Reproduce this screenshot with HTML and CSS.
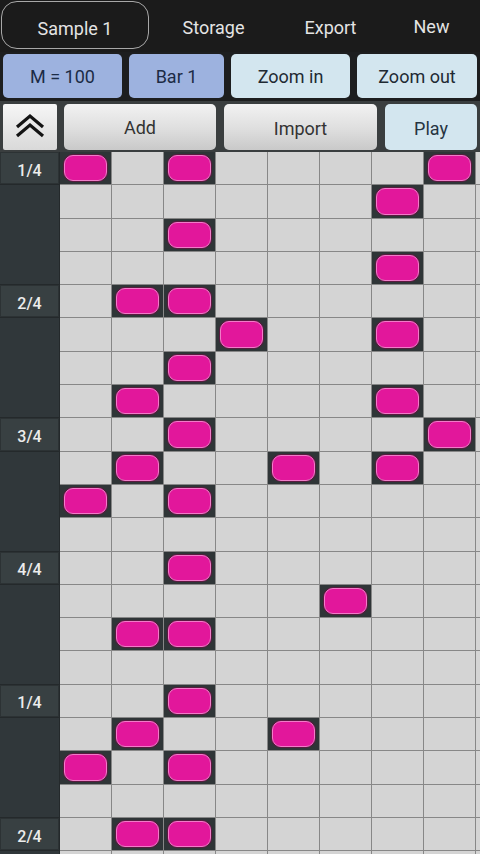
FILE: index.html
```html
<!DOCTYPE html>
<html>
<head>
<meta charset="utf-8">
<link rel="stylesheet" href="styles.css">
</head>
<body>
<div class="app">
  <div class="tabs">
    <div class="tab tab-active">Sample 1</div>
    <div class="tab tab-storage">Storage</div>
    <div class="tab tab-export">Export</div>
    <div class="tab tab-new">New</div>
  </div>
  <div class="toolbar">
    <div class="btn btn-blue w-m">M = 100</div>
    <div class="btn btn-blue w-bar">Bar 1</div>
    <div class="btn btn-light w-zin">Zoom in</div>
    <div class="btn btn-light w-zout">Zoom out</div>
  </div>
  <div class="actions">
    <div class="btn-collapse">
      <svg width="54" height="44" viewBox="0 0 54 44">
        <path d="M14 22 L27 11 L40 22" fill="none" stroke="#141414" stroke-width="3.2"/>
        <path d="M14 31 L27 20 L40 31" fill="none" stroke="#141414" stroke-width="3.2"/>
      </svg>
    </div>
    <div class="btn btn-gray w-add">Add</div>
    <div class="btn btn-gray w-import">Import</div>
    <div class="btn btn-light w-play">Play</div>
  </div>
  <div class="board">
    <div class="labels">
      <div class="lab">1/4</div><div class="fill"></div>
      <div class="lab">2/4</div><div class="fill"></div>
      <div class="lab">3/4</div><div class="fill"></div>
      <div class="lab">4/4</div><div class="fill"></div>
      <div class="lab">1/4</div><div class="fill"></div>
      <div class="lab">2/4</div><div class="fill"></div>
    </div>
    <div class="cells">
      <!-- row 0 -->
      <div class="cell note"><span class="pill"></span></div><div class="cell"></div><div class="cell note"><span class="pill"></span></div><div class="cell"></div><div class="cell"></div><div class="cell"></div><div class="cell"></div><div class="cell note"><span class="pill"></span></div><div class="cell"></div>
      <!-- row 1 -->
      <div class="cell"></div><div class="cell"></div><div class="cell"></div><div class="cell"></div><div class="cell"></div><div class="cell"></div><div class="cell note"><span class="pill"></span></div><div class="cell"></div><div class="cell"></div>
      <!-- row 2 -->
      <div class="cell"></div><div class="cell"></div><div class="cell note"><span class="pill"></span></div><div class="cell"></div><div class="cell"></div><div class="cell"></div><div class="cell"></div><div class="cell"></div><div class="cell"></div>
      <!-- row 3 -->
      <div class="cell"></div><div class="cell"></div><div class="cell"></div><div class="cell"></div><div class="cell"></div><div class="cell"></div><div class="cell note"><span class="pill"></span></div><div class="cell"></div><div class="cell"></div>
      <!-- row 4 -->
      <div class="cell"></div><div class="cell note"><span class="pill"></span></div><div class="cell note"><span class="pill"></span></div><div class="cell"></div><div class="cell"></div><div class="cell"></div><div class="cell"></div><div class="cell"></div><div class="cell"></div>
      <!-- row 5 -->
      <div class="cell"></div><div class="cell"></div><div class="cell"></div><div class="cell note"><span class="pill"></span></div><div class="cell"></div><div class="cell"></div><div class="cell note"><span class="pill"></span></div><div class="cell"></div><div class="cell"></div>
      <!-- row 6 -->
      <div class="cell"></div><div class="cell"></div><div class="cell note"><span class="pill"></span></div><div class="cell"></div><div class="cell"></div><div class="cell"></div><div class="cell"></div><div class="cell"></div><div class="cell"></div>
      <!-- row 7 -->
      <div class="cell"></div><div class="cell note"><span class="pill"></span></div><div class="cell"></div><div class="cell"></div><div class="cell"></div><div class="cell"></div><div class="cell note"><span class="pill"></span></div><div class="cell"></div><div class="cell"></div>
      <!-- row 8 -->
      <div class="cell"></div><div class="cell"></div><div class="cell note"><span class="pill"></span></div><div class="cell"></div><div class="cell"></div><div class="cell"></div><div class="cell"></div><div class="cell note"><span class="pill"></span></div><div class="cell"></div>
      <!-- row 9 -->
      <div class="cell"></div><div class="cell note"><span class="pill"></span></div><div class="cell"></div><div class="cell"></div><div class="cell note"><span class="pill"></span></div><div class="cell"></div><div class="cell note"><span class="pill"></span></div><div class="cell"></div><div class="cell"></div>
      <!-- row 10 -->
      <div class="cell note"><span class="pill"></span></div><div class="cell"></div><div class="cell note"><span class="pill"></span></div><div class="cell"></div><div class="cell"></div><div class="cell"></div><div class="cell"></div><div class="cell"></div><div class="cell"></div>
      <!-- row 11 -->
      <div class="cell"></div><div class="cell"></div><div class="cell"></div><div class="cell"></div><div class="cell"></div><div class="cell"></div><div class="cell"></div><div class="cell"></div><div class="cell"></div>
      <!-- row 12 -->
      <div class="cell"></div><div class="cell"></div><div class="cell note"><span class="pill"></span></div><div class="cell"></div><div class="cell"></div><div class="cell"></div><div class="cell"></div><div class="cell"></div><div class="cell"></div>
      <!-- row 13 -->
      <div class="cell"></div><div class="cell"></div><div class="cell"></div><div class="cell"></div><div class="cell"></div><div class="cell note"><span class="pill"></span></div><div class="cell"></div><div class="cell"></div><div class="cell"></div>
      <!-- row 14 -->
      <div class="cell"></div><div class="cell note"><span class="pill"></span></div><div class="cell note"><span class="pill"></span></div><div class="cell"></div><div class="cell"></div><div class="cell"></div><div class="cell"></div><div class="cell"></div><div class="cell"></div>
      <!-- row 15 -->
      <div class="cell"></div><div class="cell"></div><div class="cell"></div><div class="cell"></div><div class="cell"></div><div class="cell"></div><div class="cell"></div><div class="cell"></div><div class="cell"></div>
      <!-- row 16 -->
      <div class="cell"></div><div class="cell"></div><div class="cell note"><span class="pill"></span></div><div class="cell"></div><div class="cell"></div><div class="cell"></div><div class="cell"></div><div class="cell"></div><div class="cell"></div>
      <!-- row 17 -->
      <div class="cell"></div><div class="cell note"><span class="pill"></span></div><div class="cell"></div><div class="cell"></div><div class="cell note"><span class="pill"></span></div><div class="cell"></div><div class="cell"></div><div class="cell"></div><div class="cell"></div>
      <!-- row 18 -->
      <div class="cell note"><span class="pill"></span></div><div class="cell"></div><div class="cell note"><span class="pill"></span></div><div class="cell"></div><div class="cell"></div><div class="cell"></div><div class="cell"></div><div class="cell"></div><div class="cell"></div>
      <!-- row 19 -->
      <div class="cell"></div><div class="cell"></div><div class="cell"></div><div class="cell"></div><div class="cell"></div><div class="cell"></div><div class="cell"></div><div class="cell"></div><div class="cell"></div>
      <!-- row 20 -->
      <div class="cell"></div><div class="cell note"><span class="pill"></span></div><div class="cell note"><span class="pill"></span></div><div class="cell"></div><div class="cell"></div><div class="cell"></div><div class="cell"></div><div class="cell"></div><div class="cell"></div>
      <!-- row 21 -->
      <div class="cell"></div><div class="cell"></div><div class="cell"></div><div class="cell"></div><div class="cell"></div><div class="cell"></div><div class="cell"></div><div class="cell"></div><div class="cell"></div>
    </div>
  </div>
</div>
</body>
</html>
```

FILE: styles.css
```css
* { box-sizing: border-box; }
html, body {
  margin: 0;
  padding: 0;
  width: 480px;
  height: 854px;
  overflow: hidden;
  background: #1c1c1c;
  font-family: Roboto, "Noto Sans", "Liberation Sans", sans-serif;
}
.app {
  width: 480px;
  height: 854px;
  display: flex;
  flex-direction: column;
  overflow: hidden;
}

/* top tabs */
.tabs {
  height: 52px;
  flex: none;
  display: flex;
  align-items: stretch;
  padding: 1px 0 3px 1px;
  background: #1b1b1b;
}
.tab {
  display: flex;
  align-items: center;
  justify-content: center;
  color: #e4e4e4;
  font-size: 18px;
  padding-top: 5px;
}
.tab-active {
  width: 148px;
  padding-top: 6px;
  border: 1.5px solid #a8a8a8;
  border-radius: 16px;
}
.tab-storage { width: 129px; }
.tab-export { width: 105px; }
.tab-new { width: 97px; padding-top: 2px; }

/* buttons */
.btn {
  display: flex;
  align-items: center;
  justify-content: center;
  font-size: 18px;
  border-radius: 5px;
}
.toolbar {
  height: 49px;
  flex: none;
  display: flex;
  padding: 2px 0 3px 3px;
  background: #1d1e1f;
}
.btn-blue {
  background: #9db2df;
  color: #1c2b45;
}
.btn-light {
  background: #d3e6ef;
  color: #1f2a33;
}
.w-m { width: 119px; margin-right: 7px; }
.w-bar { width: 95px; margin-right: 7px; }
.w-zin { width: 119px; margin-right: 7px; }
.w-zout { width: 120px; }

.actions {
  height: 51px;
  flex: none;
  display: flex;
  padding: 3px 0 2px 3px;
  background: #3a3e3f;
}
.btn-collapse {
  width: 54px;
  margin-right: 7px;
  border-radius: 2px;
  background: linear-gradient(#f6f6f6, #d9d9d9);
  display: flex;
  align-items: center;
  justify-content: center;
}
.btn-gray {
  background: linear-gradient(#f2f2f2 0%, #dedede 55%, #c9c9c9 100%);
  color: #333;
  padding-top: 1px;
}
.w-add { width: 152px; margin-right: 8px; }
.w-import { width: 153px; margin-right: 8px; padding-top: 3px; }
.w-play { width: 92px; color: #263441; padding-top: 3px; }

/* board */
.board {
  flex: 1;
  display: flex;
  overflow: hidden;
  background: #878787;
}
.labels {
  width: 60px;
  flex: none;
  display: flex;
  flex-direction: column;
  gap: 1px;
  background: #24292b;
  border-right: 1px solid #24292b;
}
.lab {
  height: 32.3px;
  flex: none;
  display: flex;
  align-items: center;
  justify-content: center;
  padding-top: 4px;
  background: #384042;
  border: 1px solid #2c3234;
  color: #ececec;
  font-size: 16px;
  font-weight: 500;
}
.fill {
  height: 98.9px;
  flex: none;
  background: #30373a;
}
.cells {
  flex: 1;
  display: grid;
  grid-template-columns: repeat(8, 51px) 1fr;
  grid-auto-rows: 32.3px;
  column-gap: 1px;
  row-gap: 1px;
  align-content: start;
}
.cell {
  background: #d4d4d4;
}
.note {
  background: #2f3537;
  padding: 3px 4px 3px 4px;
  display: flex;
}
.pill {
  flex: 1;
  border-radius: 9px;
  background: #e2179b;
  border: 1.5px solid #f07cc8;
  box-shadow: 0 0 0 1px #5a1a40;
}
```
